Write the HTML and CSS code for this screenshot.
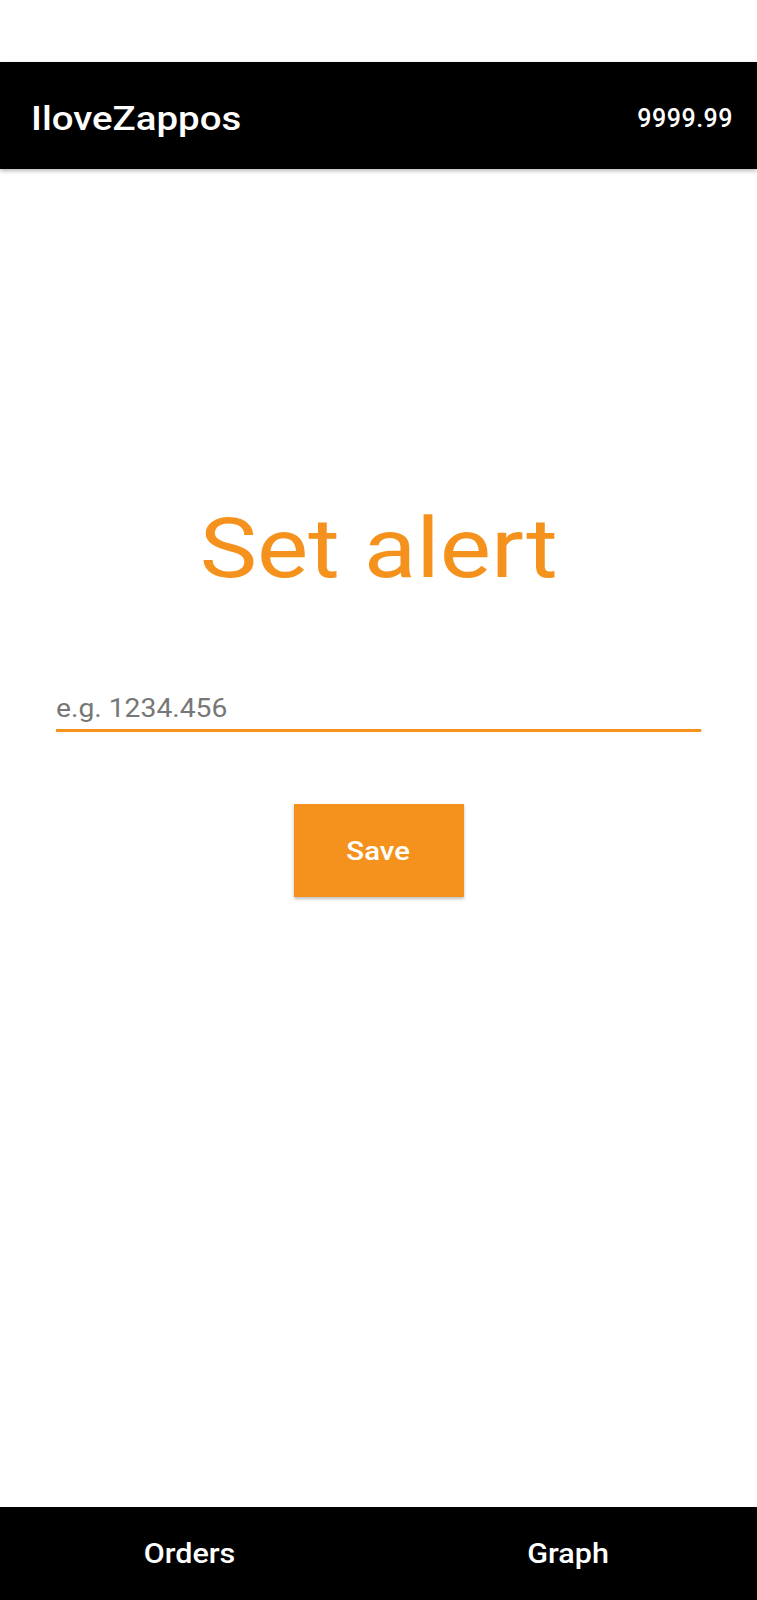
FILE: index.html
```html
<!DOCTYPE html>
<html lang="en">
<head>
<meta charset="utf-8">
<title>IloveZappos</title>
<link rel="stylesheet" href="styles.css">
</head>
<body>
<div class="page">
  <div class="status-gap"></div>
  <header class="appbar">
    <span class="appbar-title wide wide-left">IloveZappos</span>
    <span class="appbar-price">9999.99</span>
  </header>
  <main class="content">
    <h1 class="headline"><span class="wide wide-xl">Set alert</span></h1>
    <div class="field">
      <input class="field-input" type="text" placeholder="e.g. 1234.456">
    </div>
    <button class="save-btn" type="button"><span class="wide">Save</span></button>
  </main>
  <nav class="bottom-nav">
    <span class="nav-item wide">Orders</span>
    <span class="nav-item wide">Graph</span>
  </nav>
</div>
</body>
</html>
```

FILE: styles.css
```css
* { box-sizing: border-box; }
html, body {
  margin: 0;
  padding: 0;
  background: #ffffff;
}
body {
  font-family: Roboto, "Liberation Sans", Arial, sans-serif;
}
.page {
  width: 757px;
  min-height: 1600px;
  display: flex;
  flex-direction: column;
}
.wide {
  display: inline-block;
  transform: scaleX(1.13);
  transform-origin: center;
}
.wide-xl { transform: scaleX(1.15); }
.wide-left { transform-origin: left center; }
.status-gap {
  height: 62px;
  background: #ffffff;
}
.appbar {
  height: 107px;
  background: #000000;
  color: #ffffff;
  display: flex;
  align-items: center;
  justify-content: space-between;
  padding: 5px 24px 0 31px;
  box-shadow: 0 2px 4px rgba(0, 0, 0, 0.28);
  position: relative;
  z-index: 1;
}
.appbar-title {
  font-size: 34px;
  font-weight: 500;
}
.appbar-price {
  font-size: 25px;
  font-weight: 500;
  letter-spacing: 0.5px;
}
.content {
  flex: 1;
  display: flex;
  flex-direction: column;
  align-items: center;
  padding-top: 338px;
}
.headline {
  margin: 0;
  font-size: 84px;
  line-height: 84px;
  font-weight: 400;
  color: #f5921e;
}
.field {
  margin-top: 101px;
  width: 645px;
}
.field-input {
  display: block;
  width: 571px;
  height: 40px;
  transform: scaleX(1.13);
  transform-origin: left center;
  border: none;
  border-bottom: 3px solid #f5921e;
  outline: none;
  padding: 0 0 5px 0;
  margin: 0;
  font-family: Roboto, "Liberation Sans", Arial, sans-serif;
  font-size: 25px;
  line-height: 30px;
  color: #333333;
  background: transparent;
}
.field-input::placeholder {
  color: #777777;
}
.save-btn {
  margin-top: 72px;
  width: 170px;
  height: 93px;
  border: none;
  border-radius: 0;
  background: #f5921e;
  color: #ffffff;
  font-family: Roboto, "Liberation Sans", Arial, sans-serif;
  font-size: 26px;
  font-weight: 500;
  box-shadow: 0 2px 3px rgba(0, 0, 0, 0.25);
  padding: 0;
}
.bottom-nav {
  height: 93px;
  background: #000000;
  display: grid;
  grid-template-columns: 1fr 1fr;
  align-items: center;
  justify-items: center;
}
.nav-item {
  color: #ffffff;
  font-size: 27px;
  font-weight: 500;
}
```
